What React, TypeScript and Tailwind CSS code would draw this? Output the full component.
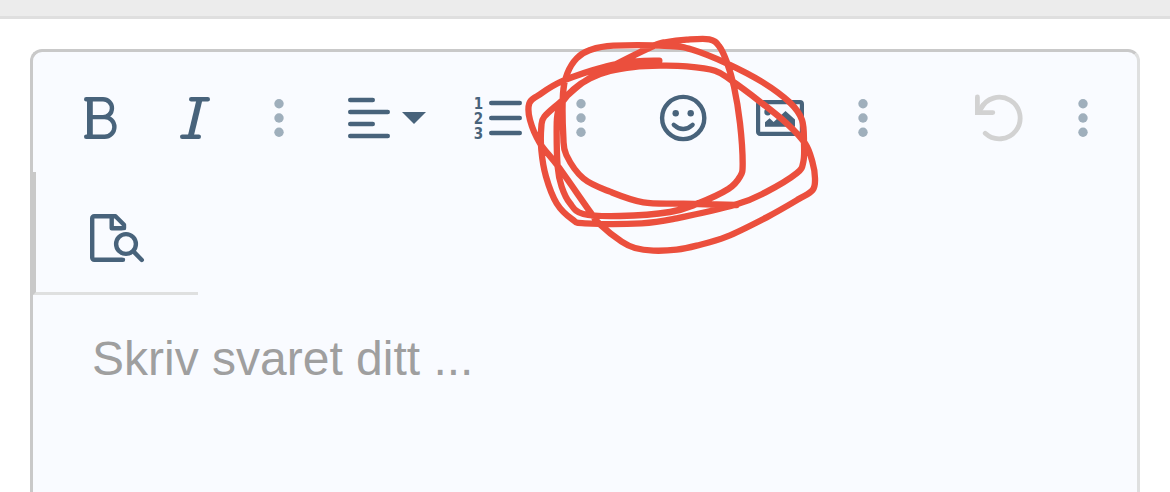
import type { ReactNode } from 'react';

type Point = [number, number];

// Freehand marker stroke, one continuous line
const SCRIBBLE: Point[] = [
    [448, 122], [380, 124], [290, 139], [160, 182], [85, 226], [58, 250], [60, 300], [90, 370],
    [145, 440], [240, 575], [270, 613], [335, 665], [375, 684], [430, 692], [500, 689], [560, 677],
    [650, 650], [770, 592], [865, 538], [908, 510], [915, 475], [907, 425], [885, 370], [830, 310],
    [750, 245], [665, 182], [615, 152], [530, 139], [450, 137], [370, 141], [300, 153], [240, 175],
    [190, 208], [160, 242], [144, 275], [140, 320], [143, 440], [155, 500], [180, 550], [220, 582],
    [330, 588], [480, 576], [560, 552], [655, 507], [690, 470], [698, 430], [690, 310], [672, 200],
    [650, 125], [627, 78], [598, 58], [530, 59], [470, 66], [430, 78], [310, 137], [225, 183],
    [150, 247], [103, 290], [94, 320], [94, 390], [108, 470], [140, 550], [187, 598], [225, 610],
    [395, 610], [500, 595], [680, 553], [765, 518], [860, 460], [880, 425], [882, 370], [876, 300],
    [840, 248], [755, 185], [650, 130], [550, 90], [480, 78], [310, 77], [240, 90], [200, 115],
    [172, 160], [159, 220], [160, 350], [169, 405], [220, 475], [300, 515], [400, 547], [520, 551],
    [680, 555],
];

function smoothPath(points: Point[]) {
    let d = `M${points[0][0]} ${points[0][1]}`;
    for (let i = 0; i < points.length - 1; i++) {
        const p0 = points[i - 1] ?? points[i];
        const p1 = points[i];
        const p2 = points[i + 1];
        const p3 = points[i + 2] ?? p2;
        d += `C${p1[0] + (p2[0] - p0[0]) / 6} ${p1[1] + (p2[1] - p0[1]) / 6}`;
        d += ` ${p2[0] - (p3[0] - p1[0]) / 6} ${p2[1] - (p3[1] - p1[1]) / 6} ${p2[0]} ${p2[1]}`;
    }
    return d;
}

function Icon({ width = 48, children }: { width?: number; children: ReactNode }) {
    return (
        <svg
            width={width}
            height={48}
            viewBox={`0 0 ${width} 48`}
            fill="none"
            stroke="currentColor"
            strokeWidth={4.4}
            strokeLinecap="round"
            strokeLinejoin="round"
            aria-hidden="true"
            className="shrink-0 overflow-visible"
        >
            {children}
        </svg>
    );
}

function ToolButton({ label, disabled, children }: { label: string; disabled?: boolean; children: ReactNode }) {
    return (
        <button
            type="button"
            aria-label={label}
            disabled={disabled}
            className="flex h-27 w-24 shrink-0 items-center justify-center disabled:text-[#d2d2d2]"
        >
            {children}
        </button>
    );
}

function MoreButton({ label }: { label: string }) {
    return (
        <button
            type="button"
            aria-label={label}
            className="flex h-27 w-[70px] shrink-0 items-center justify-center text-[#9fafbc]"
        >
            <svg width={10} height={38} viewBox="0 0 10 38" fill="currentColor" aria-hidden="true">
                <circle cx={5} cy={4.8} r={4.7} />
                <circle cx={5} cy={19} r={4.7} />
                <circle cx={5} cy={33.2} r={4.7} />
            </svg>
        </button>
    );
}

export default function App() {
    return (
        <div className="flex min-h-screen flex-col bg-white font-['Liberation_Sans',sans-serif]">
            <div className="h-[19px] border-b-3 border-[#dfdfdf] bg-[#ececec]" />

            <div className="relative mx-[30px] mt-[30px] flex flex-1 flex-col rounded-t-xl border-3 border-b-0 border-t-[#c9c9c9] border-r-[#dfe0e0] border-l-[#c9c9c9] bg-[#f9fbff] text-[#48637b]">
                {/* Toolbar */}
                <div className="flex px-[19px] pt-3">
                    <div className="flex">
                        <ToolButton label="Fet">
                            <Icon>
                                <path d="M10.2 5.2H27a8.9 8.9 0 0 1 0 17.9H14M27 23.1h1.6a9.8 9.8 0 0 1 0 19.6H10.2" />
                                <path d="M13.9 6v36" strokeWidth={5.8} strokeLinecap="butt" />
                            </Icon>
                        </ToolButton>
                        <ToolButton label="Kursiv">
                            <Icon>
                                <path d="M19.2 5.2h16.6M10.2 42.8h16.6" />
                                <path d="M27.6 5.2L18.6 42.8" strokeWidth={5.8} strokeLinecap="butt" />
                            </Icon>
                        </ToolButton>
                        <MoreButton label="Mer tekst" />
                    </div>

                    <div className="flex">
                        <button type="button" aria-label="Juster" className="flex h-27 w-34 shrink-0 items-center justify-end pr-6">
                            <Icon width={78}>
                                <path d="M2.2 6h22.6M2.2 18h37.6M2.2 30h22.6M2.2 42h37.6" />
                                <path d="M54 18h24L66 30z" fill="currentColor" stroke="none" />
                            </Icon>
                        </button>
                        <ToolButton label="Nummerert liste">
                            <Icon>
                                <path d="M17.2 9h28.6M17.2 24h28.6M17.2 39h28.6" />
                                <g
                                    fill="currentColor"
                                    stroke="none"
                                    textAnchor="middle"
                                    className="font-['DejaVu_Sans_Condensed','DejaVu_Sans',sans-serif] text-[15px] font-bold"
                                >
                                    <text x={4.5} y={15}>1</text>
                                    <text x={4.5} y={30}>2</text>
                                    <text x={4.5} y={45}>3</text>
                                </g>
                            </Icon>
                        </ToolButton>
                        <MoreButton label="Mer avsnitt" />
                    </div>

                    <div className="ml-5 flex">
                        <ToolButton label="Uttrykksikoner">
                            <Icon>
                                <circle cx={23.2} cy={24} r={21.1} />
                                <circle cx={15.7} cy={19.3} r={3.2} fill="currentColor" stroke="none" />
                                <circle cx={30.7} cy={19.3} r={3.2} fill="currentColor" stroke="none" />
                                <path d="M13.8 30.8q9.4 8.4 18.8 0" />
                            </Icon>
                        </ToolButton>
                        <ToolButton label="Sett inn bilde">
                            <Icon>
                                <rect x={2.1} y={8.1} width={43.8} height={31.8} rx={2} strokeWidth={4.2} />
                                <circle cx={11.7} cy={18} r={3.4} fill="currentColor" stroke="none" />
                                <path d="M9 32.8v-4.6l4.6-4 4 3.8L29.5 17l9.5 8.6v7.2z" fill="currentColor" stroke="none" />
                            </Icon>
                        </ToolButton>
                        <MoreButton label="Mer innhold" />
                    </div>

                    <div className="ml-auto flex">
                        <ToolButton label="Angre" disabled>
                            <Icon>
                                <path d="M4.6 15A20.8 20.8 0 1 1 9.2 39.3" strokeWidth={4.8} />
                                <path d="M1.4 3v15.6h15.4" strokeWidth={4.8} strokeLinejoin="miter" />
                                <path d="M2 19l6-9" strokeWidth={4.8} strokeLinecap="butt" />
                            </Icon>
                        </ToolButton>
                        <MoreButton label="Flere valg" />
                    </div>
                </div>

                <div className="flex w-[165px] justify-center border-b-3 border-l-3 border-b-[#dfe0e0] border-l-[#c9c9c9] pt-3">
                    <ToolButton label="Forhåndsvis">
                        <Icon width={54}>
                            <path d="M33 45.7H4.2a2 2 0 0 1-2-2V4.2a2 2 0 0 1 2-2h21.3L34 10.8v3.5H21.7V2.2" strokeWidth={4.4} />
                            <circle cx={36} cy={30} r={13.8} fill="#f9fbff" stroke="none" />
                            <circle cx={36} cy={30} r={9.9} />
                            <path d="M43.4 37.4l8.4 8.6" />
                        </Icon>
                    </ToolButton>
                </div>

                <textarea
                    aria-label="Svar"
                    placeholder="Skriv svaret ditt ..."
                    className="w-full flex-1 resize-none bg-transparent px-[59px] pt-9 text-5xl leading-14 outline-none placeholder:text-[#9f9f9f]"
                />

                {/* Marker drawn over the toolbar */}
                <svg
                    width={330}
                    height={250}
                    viewBox="0 0 990 750"
                    fill="none"
                    aria-hidden="true"
                    className="pointer-events-none absolute -top-8 left-[477px] text-[#eb4f3d]"
                >
                    <path
                        d={smoothPath(SCRIBBLE)}
                        stroke="currentColor"
                        strokeWidth={19}
                        strokeLinecap="round"
                        strokeLinejoin="round"
                    />
                </svg>
            </div>
        </div>
    );
}
